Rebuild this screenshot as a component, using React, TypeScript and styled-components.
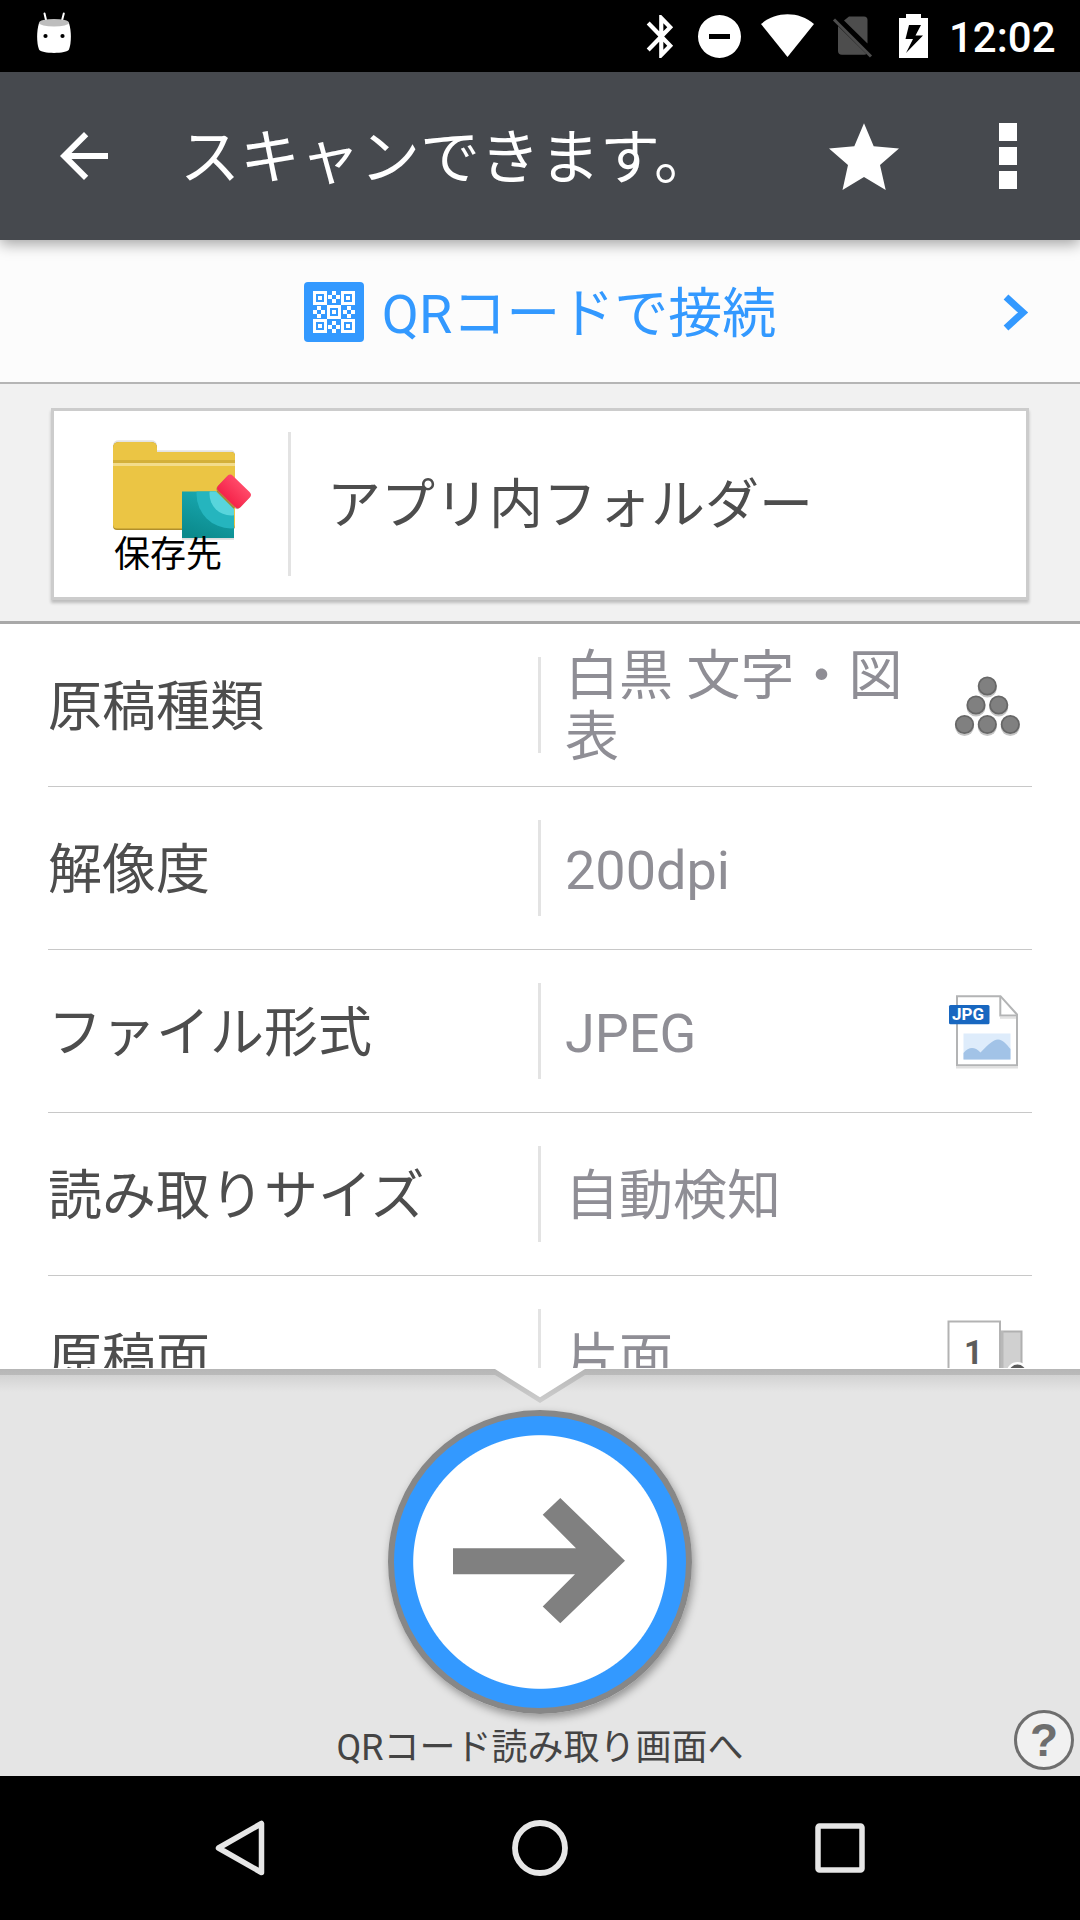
import React from "react";
import styled, { createGlobalStyle } from "styled-components";

const Global = createGlobalStyle`
  * { box-sizing: border-box; }
  body { margin: 0; background: #000; }
`;

const Screen = styled.div`
  width: 1080px;
  height: 1920px;
  display: flex;
  flex-direction: column;
  overflow: hidden;
  background: #fff;
  font-family: Roboto, "Noto Sans CJK JP", sans-serif;
  color: #4d4d4d;
`;

const Svg = styled.svg`
  display: block;
  flex: none;
  overflow: visible;
`;

const StatusBar = styled.div`
  flex: none;
  height: 72px;
  background: #000;
  display: flex;
  align-items: center;
  justify-content: space-between;
  padding: 0 24px 0 30px;
`;

const StatusIcons = styled.div`
  display: flex;
  align-items: center;
`;

const Clock = styled.span`
  width: 108px;
  font-size: 42px;
  line-height: 50px;
  font-weight: 500;
  color: #fff;
  padding: 4px 0 0 1px;
`;

const Header = styled.header`
  flex: none;
  height: 168px;
  background: #46494e;
  display: flex;
  align-items: center;
  padding: 0 63px 0 48px;
  position: relative;
  box-shadow: 0 4px 14px rgba(0, 0, 0, 0.36);
`;

const Title = styled.h1`
  flex: 1;
  margin: 0;
  padding: 5px 0 0 60px;
  font-size: 60px;
  line-height: 72px;
  font-weight: 400;
  color: #fff;
`;

const MenuDots = styled.div`
  display: flex;
  flex-direction: column;
  gap: 6px;
  margin-left: 99px;
`;

const Dot = styled.span`
  width: 18px;
  height: 18px;
  background: #fff;
`;

const QrRow = styled.div`
  flex: none;
  height: 144px;
  background: #fcfcfc;
  border-bottom: 2px solid #b5b5b5;
  padding-top: 2px;
  display: grid;
  grid-template-columns: 80px 1fr 80px;
  align-items: center;
`;

const QrLink = styled.div`
  grid-column: 2;
  display: flex;
  align-items: center;
  justify-content: center;
  gap: 18px;
  color: #3399ff;
  font-size: 54px;
  line-height: 64px;
`;

const QrText = styled.span`
  padding-top: 6px;
`;

const DestinationArea = styled.section`
  flex: none;
  height: 240px;
  background: #f1f1f1;
  border-bottom: 3px solid #a8a8a8;
  padding: 24px 51px 0;
`;

const DestinationCard = styled.div`
  height: 192px;
  background: #fff;
  border: 3px solid #ccc;
  box-shadow: 0 3px 3px rgba(0, 0, 0, 0.22);
  display: flex;
  align-items: center;
  font-size: 54px;
  line-height: 64px;
`;

const FolderBox = styled.div`
  width: 234px;
  height: 186px;
  position: relative;
`;

const FolderCaption = styled.span`
  position: absolute;
  left: 60px;
  top: 122px;
  font-size: 36px;
  line-height: 44px;
  color: #000;
`;

const CardDivider = styled.span`
  width: 3px;
  height: 144px;
  background: #e3e3e3;
  margin-right: 36px;
`;

const SettingsList = styled.main`
  flex: none;
  height: 744px;
  overflow: hidden;
  padding: 0 48px;
  background: #fff;
`;

const Row = styled.div`
  height: 163px;
  border-bottom: 1px solid #c8c8c8;
  display: grid;
  grid-template-columns: 490px 3px 24px 367px 13px 84px;
  align-items: center;
  font-size: 54px;
  line-height: 61px;
`;

const RowLabel = styled.span`
  padding-top: 5px;
`;

const RowDivider = styled.span`
  height: 96px;
  background: #e3e3e3;
`;

const RowValue = styled.span`
  grid-column: 4;
  padding-top: 4px;
  color: #8f8e95;
`;

const ActionPanel = styled.footer`
  flex: none;
  height: 408px;
  position: relative;
  background: #e5e5e5;
  display: flex;
  flex-direction: column;
  align-items: center;
  padding-top: 42px;
`;

const PanelEdge = styled(Svg)`
  position: absolute;
  left: 0;
  top: 0;
`;

const ScanButton = styled.button`
  flex: none;
  width: 304px;
  height: 304px;
  padding: 0;
  border: 6px solid #878787;
  border-radius: 50%;
  background: radial-gradient(circle, #fff 126.3px, #3399ff 127.3px);
  box-shadow: 2px 4px 8px rgba(0, 0, 0, 0.35);
`;

const ActionCaption = styled.div`
  margin-top: 12px;
  font-size: 36px;
  line-height: 44px;
  color: #444;
`;

const HelpButton = styled.button`
  position: absolute;
  right: 6px;
  bottom: 6px;
  width: 60px;
  height: 60px;
  padding: 0;
  border: 3px solid #6e6e6e;
  border-radius: 50%;
  background: #f1f1f1;
  color: #6e6e6e;
  font: bold 46px/54px "Liberation Sans", sans-serif;
`;

const NavBar = styled.nav`
  flex: none;
  height: 144px;
  background: #000;
  display: flex;
  align-items: center;
  justify-content: center;
  gap: 228px;
`;

const Marshmallow = () => (
  <Svg width="48" height="48" viewBox="30 12 48 48">
    <path d="M44.5 13.5 46.5 22M63.8 13.5 61.6 22" stroke="#fff" strokeWidth="2" strokeLinecap="round" />
    <path d="M39 23C36.500 31 36.500 43 39 49.500C41 54 67 54 69 49.500C71.500 43 71.500 31 69 23Z" fill="#fff" />
    <ellipse cx="54" cy="22.700" rx="15" ry="3.800" fill="#bdbdbd" />
    <circle cx="45.500" cy="36" r="2.100" />
    <circle cx="62.500" cy="36" r="2.100" />
  </Svg>
);

const StatusGlyphs = () => (
  <Svg width="318" height="48" viewBox="630 12 318 48">
    <g fill="#fff">
      <path
        transform="translate(636.3 10.7) scale(2.08 2.15)"
        d="M17.710 7.710L12 2h-1v7.590L6.410 5 5 6.410 10.590 12 5 17.590 6.410 19 11 14.410V22h1l5.710-5.710-4.300-4.290 4.300-4.290zM13 5.830l1.880 1.880L13 9.590V5.830zm1.880 10.460L13 18.170v-3.760l1.880 1.880z"
      />
      <path d="M719.500 15a21.500 21.500 0 1 0 0 43a21.500 21.500 0 1 0 0-43ZM709 34H730V39H709Z" fillRule="evenodd" />
      <path d="M787.500 57 761 24C776 11 799 11 814 24Z" />
      <path d="M906 14H921V18H928V58H899V18H906ZM909 25 905.500 39H913L906 53 923 35.500H915.500L921 25Z" fillRule="evenodd" />
    </g>
    <path d="M849 16.500H864Q867.500 16.500 867.500 20V43.500L844 20.500ZM838 26 866.500 54Q866 54.700 864 54.700H842Q838 54.700 838 51Z" fill="#4d4d4d" />
    <path d="M834 19.500 871 56.500" stroke="#4d4d4d" strokeWidth="3" />
  </Svg>
);

const BackArrow = () => (
  <Svg width="72" height="72" viewBox="0 0 24 24" fill="#fff">
    <path d="M20 11H7.830l5.590-5.590L12 4l-8 8 8 8 1.410-1.410L7.830 13H20v-2z" />
  </Svg>
);

const Star = () => (
  <Svg width="72" height="72" viewBox="828 120 72 72" fill="#fff">
    <path d="M864 123.300 873.700 146.300 899 148.500 880 165 885.700 190 864 177 842.500 190 848 165 829 148.500 854.300 146.300Z" />
  </Svg>
);

const finders = [[9, 9], [37, 9], [23, 23], [9, 37], [37, 37]];
const clusters = [[30, 15], [15, 30], [45, 30], [30, 45]];

const QrIcon = () => (
  <Svg width="60" height="60" viewBox="0 0 60 60" shapeRendering="crispEdges">
    <rect width="60" height="60" rx="4" fill="#3399ff" shapeRendering="auto" />
    {finders.map(([x, y]) => (
      <g key={`${x}-${y}`}>
        <rect x={x} y={y} width="14" height="14" fill="#fff" />
        <rect x={x + 3} y={y + 3} width="8" height="8" fill="#3399ff" />
        <rect x={x + 5} y={y + 5} width="4" height="4" fill="#fff" />
      </g>
    ))}
    {clusters.map(([x, y]) => (
      <path
        key={`${x}-${y}`}
        fill="#fff"
        d={`M${x - 2} ${y - 6}h4v4h-4zM${x - 6} ${y - 2}h4v4h-4zM${x + 2} ${y - 2}h4v4h-4zM${x - 2} ${y + 2}h4v4h-4z`}
      />
    ))}
  </Svg>
);

const Chevron = () => (
  <Svg width="30" height="42" viewBox="1000 291 30 42">
    <path d="M1006 297 1023 312.500 1006 328" fill="none" stroke="#3399ff" strokeWidth="7" />
  </Svg>
);

const FolderIcon = () => (
  <Svg width="234" height="186" viewBox="54 411 234 186">
    <defs>
      <linearGradient id="teal" x1="0.700" y1="0" x2="0.300" y2="1">
        <stop offset="0" stopColor="#1aabb4" />
        <stop offset="1" stopColor="#0b8a8c" />
      </linearGradient>
      <linearGradient id="pink" x1="0" y1="0" x2="0" y2="1">
        <stop offset="0" stopColor="#ff4a69" />
        <stop offset="1" stopColor="#f5234a" />
      </linearGradient>
      <clipPath id="sheet">
        <path d="M182 491.500H216L234 509V538H182Z" />
      </clipPath>
    </defs>
    <path d="M113 446Q113 440.300 119 440.300H151Q157 440.300 157 446V450.300H231Q235 450.300 235 455V470H113Z" fill="#e3e3e3" />
    <path d="M113 448Q113 442 119 442H151Q157 442 157 448V452H231Q235 452 235 456V526Q235 530 231 530H117Q113 530 113 526Z" fill="#b08f2c" />
    <path d="M113 448Q113 442 119 442H151Q157 442 157 448V452H231Q235 452 235 456V524.500Q235 528.500 231 528.500H117Q113 528.500 113 524.500Z" fill="#ebc544" />
    <path d="M113 460H235V463H113Z" fill="#d4b03a" />
    <path d="M113 463H235V466H113Z" fill="#f3dc8b" />
    <path d="M182 538H234V539.800H182Z" fill="#ddd" />
    <g clipPath="url(#sheet)">
      <rect x="182" y="491" width="52" height="47" fill="url(#teal)" />
      <circle cx="231" cy="494" r="34.500" fill="#25b5be" />
      <circle cx="231" cy="494" r="21.500" fill="#58d5dc" />
    </g>
    <path d="M217 491 234 508" stroke="#a38b35" strokeWidth="1.200" />
    <g transform="translate(234 491.500) rotate(44)">
      <rect x="-15.500" y="-9.500" width="31" height="21" rx="4" fill="#8b6b49" opacity="0.500" />
      <rect x="-15.500" y="-10.500" width="31" height="21" rx="4" fill="url(#pink)" />
    </g>
  </Svg>
);

const balls = [[987.300, 686], [976, 705], [998.700, 705], [964.500, 724.500], [987.300, 724.500], [1010.300, 724.500]];

const MonoIcon = () => (
  <Svg width="84" height="84" viewBox="945 663 84 84">
    {balls.map(([x, y]) => (
      <g key={`${x}-${y}`}>
        <circle cx={x} cy={y + 2} r="9.500" fill="#c4c4c4" />
        <circle cx={x} cy={y} r="8.700" fill="#808080" stroke="#676767" strokeWidth="1.800" />
      </g>
    ))}
  </Svg>
);

const JpegTag = styled.text`
  font: bold 17px Roboto, sans-serif;
  fill: #fff;
`;

const JpegIcon = () => (
  <Svg width="84" height="84" viewBox="945 989 84 84">
    <path d="M956 1067.500H1018" stroke="#e0e0e0" strokeWidth="2" />
    <path d="M957 996.200H1000.500L1017 1014.500V1065.200H957Z" fill="#fff" stroke="#b3b4b5" strokeWidth="2" />
    <path d="M1000 1017.800H1016" stroke="#e3e3e3" strokeWidth="2" />
    <path d="M1000.300 996V1015.500H1017" fill="none" stroke="#b3b4b5" strokeWidth="2" />
    <path d="M963.500 1033.500H1010.500V1059.500H963.500Z" fill="#deecfb" />
    <path d="M963.500 1053Q971.500 1043.500 980.500 1052.500C988 1045 993 1039.500 998 1039.500C1003 1039.500 1007 1045 1010.500 1049V1059.500H963.500Z" fill="#a2c3e7" />
    <rect x="949" y="1005" width="40.500" height="19.300" rx="1.500" fill="#1867c0" />
    <JpegTag x="952" y="1020.300" textLength="32">JPG</JpegTag>
  </Svg>
);

const PageNumber = styled.text`
  font: bold 33px Roboto, sans-serif;
  fill: #5c5c5c;
`;

const SideIcon = () => (
  <Svg width="84" height="84" viewBox="945 1315 84 84">
    <path d="M1000 1331.500H1021.500V1393H1000Z" fill="#d0d0d0" stroke="#b0b0b0" strokeWidth="2" />
    <path d="M1001 1331H1003.500V1393H1001Z" fill="#b8b8b8" />
    <path d="M948.500 1321.500H1000V1393H948.500Z" fill="#fff" stroke="#b3b3b3" strokeWidth="2" />
    <PageNumber x="964" y="1363.500">1</PageNumber>
    <circle cx="1017.500" cy="1373" r="11" fill="#fff" />
    <circle cx="1017.500" cy="1373" r="8.500" fill="#5c5c5c" />
  </Svg>
);

const settings = [
  { label: "原稿種類", value: "白黒 文字・図表", icon: <MonoIcon /> },
  { label: "解像度", value: "200dpi" },
  { label: "ファイル形式", value: "JPEG", icon: <JpegIcon /> },
  { label: "読み取りサイズ", value: "自動検知" },
  { label: "原稿面", value: "片面", icon: <SideIcon /> },
];

const IconCell = styled.span`
  grid-column: 6;
`;

const CardText = styled.span`
  padding-top: 4px;
`;

export default function App() {
  return (
    <Screen>
      <Global />
      <StatusBar>
        <Marshmallow />
        <StatusIcons>
          <StatusGlyphs />
          <Clock>12:02</Clock>
        </StatusIcons>
      </StatusBar>
      <Header>
        <BackArrow />
        <Title>スキャンできます。</Title>
        <Star />
        <MenuDots>
          <Dot />
          <Dot />
          <Dot />
        </MenuDots>
      </Header>
      <QrRow>
        <QrLink>
          <QrIcon />
          <QrText>QRコードで接続</QrText>
        </QrLink>
        <Chevron />
      </QrRow>
      <DestinationArea>
        <DestinationCard>
          <FolderBox>
            <FolderIcon />
            <FolderCaption>保存先</FolderCaption>
          </FolderBox>
          <CardDivider />
          <CardText>アプリ内フォルダー</CardText>
        </DestinationCard>
      </DestinationArea>
      <SettingsList>
        {settings.map((s) => (
          <Row key={s.label}>
            <RowLabel>{s.label}</RowLabel>
            <RowDivider />
            <RowValue>{s.value}</RowValue>
            <IconCell>{s.icon}</IconCell>
          </Row>
        ))}
      </SettingsList>
      <ActionPanel>
        <PanelEdge width="1080" height="48" viewBox="0 1368 1080 48">
          <defs>
            <linearGradient id="edge" x1="0" y1="0" x2="0" y2="1">
              <stop offset="0" stopColor="#d2d2d2" />
              <stop offset="1" stopColor="#e5e5e5" />
            </linearGradient>
            <linearGradient id="lip" x1="0" y1="1369" x2="0" y2="1403" gradientUnits="userSpaceOnUse">
              <stop offset="0" stopColor="#b6b6b6" />
              <stop offset="1" stopColor="#cdcdcd" />
            </linearGradient>
          </defs>
          <path d="M0 1375H1080V1392H0Z" fill="url(#edge)" />
          <path d="M0 1369H1080V1375H585L540 1403 495 1375H0Z" fill="url(#lip)" />
          <path d="M0 1368H1080V1369H585L540 1397.300 495 1369H0Z" fill="#fff" />
        </PanelEdge>
        <ScanButton>
          <Svg width="292" height="292" viewBox="394 1416 292 292" fill="#808080">
            <path d="M453 1548.300H576L542.700 1514.700 560.300 1498 625 1560.700 560.300 1623.300 542.700 1606.500 575 1574.300H453Z" />
          </Svg>
        </ScanButton>
        <ActionCaption>QRコード読み取り画面へ</ActionCaption>
        <HelpButton>?</HelpButton>
      </ActionPanel>
      <NavBar>
        <Svg width="72" height="72" viewBox="204 1812 72 72">
          <path d="M261.500 1823.500V1872.500L218.500 1848Z" fill="none" stroke="#e6e6e6" strokeWidth="5.500" strokeLinejoin="round" />
        </Svg>
        <Svg width="72" height="72" viewBox="504 1812 72 72">
          <circle cx="540" cy="1848" r="25" fill="none" stroke="#e6e6e6" strokeWidth="5.800" />
        </Svg>
        <Svg width="72" height="72" viewBox="804 1812 72 72">
          <rect x="818" y="1826" width="44" height="44" rx="1.500" fill="none" stroke="#e6e6e6" strokeWidth="5.500" />
        </Svg>
      </NavBar>
    </Screen>
  );
}
